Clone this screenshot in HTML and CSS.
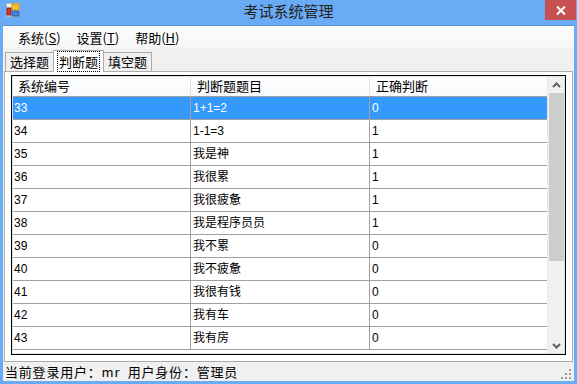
FILE: index.html
```html
<!DOCTYPE html>
<html lang="zh-CN">
<head>
    <meta charset="UTF-8">
    <title>考试系统管理</title>
    <link rel="stylesheet" href="styles.css">
</head>
<body>
    <div class="window">
        <div class="titlebar">
            <svg class="app-icon" width="14" height="14" viewBox="0 0 14 14">
                <rect x="0.5" y="0.5" width="13" height="13" fill="#f4f4f4" stroke="#b9b9b9"/>
                <rect x="6" y="1" width="7" height="6" fill="#f2c230" stroke="#c8961a"/>
                <rect x="1" y="5" width="4" height="7" fill="#d2322d" stroke="#8c1d1a"/>
                <rect x="6" y="8" width="7" height="5" fill="#3d86d8" stroke="#2a5ea0"/>
            </svg>
            <span class="title">考试系统管理</span>
            <button class="close-btn">
                <svg width="10" height="9" viewBox="0 0 10 9">
                    <path d="M1 0.5 L9 8.5 M9 0.5 L1 8.5" stroke="#fff" stroke-width="2"/>
                </svg>
            </button>
        </div>

        <div class="client">
            <div class="menubar">
                <span class="menu-item">系统(<u>S</u>)</span>
                <span class="menu-item">设置(<u>T</u>)</span>
                <span class="menu-item">帮助(<u>H</u>)</span>
            </div>

            <div class="tabs">
                <span class="tab">选择题</span>
                <span class="tab active"><span class="focus">判断题</span></span>
                <span class="tab">填空题</span>
            </div>

            <div class="tabpage">
                <div class="grid">
                    <div class="grid-body">
                        <table class="table">
                            <thead>
                                <tr>
                                    <th>系统编号</th>
                                    <th>判断题题目</th>
                                    <th>正确判断</th>
                                </tr>
                            </thead>
                            <tbody id="rows"></tbody>
                        </table>
                    </div>
                    <div class="scrollbar">
                        <div class="sb-btn">
                            <svg width="9" height="6" viewBox="0 0 9 6"><path d="M1 5 L4.5 1.5 L8 5" fill="none" stroke="#606060" stroke-width="2"/></svg>
                        </div>
                        <div class="sb-track">
                            <div class="sb-thumb"></div>
                        </div>
                        <div class="sb-btn">
                            <svg width="9" height="6" viewBox="0 0 9 6"><path d="M1 1 L4.5 4.5 L8 1" fill="none" stroke="#606060" stroke-width="2"/></svg>
                        </div>
                    </div>
                </div>
            </div>

            <div class="statusbar">
                <span class="status-text">当前登录用户：mr&nbsp;&nbsp;用户身份：管理员</span>
                <svg class="grip" width="11" height="11" viewBox="0 0 11 11" fill="#9a9a9a">
                    <rect x="8" y="0" width="2" height="2"/>
                    <rect x="4" y="4" width="2" height="2"/><rect x="8" y="4" width="2" height="2"/>
                    <rect x="0" y="8" width="2" height="2"/><rect x="4" y="8" width="2" height="2"/><rect x="8" y="8" width="2" height="2"/>
                </svg>
            </div>
        </div>
    </div>

    <script>
        var data = [
            ["33", "1+1=2", "0"],
            ["34", "1-1=3", "1"],
            ["35", "我是神", "1"],
            ["36", "我很累", "1"],
            ["37", "我很疲惫", "1"],
            ["38", "我是程序员员", "1"],
            ["39", "我不累", "0"],
            ["40", "我不疲惫", "0"],
            ["41", "我很有钱", "0"],
            ["42", "我有车", "0"],
            ["43", "我有房", "0"]
        ];
        var tbody = document.getElementById("rows");
        data.forEach(function(row, i) {
            var tr = document.createElement("tr");
            if (i === 0) tr.className = "selected";
            row.forEach(function(cell) {
                var td = document.createElement("td");
                td.textContent = cell;
                tr.appendChild(td);
            });
            tbody.appendChild(tr);
        });
    </script>
</body>
</html>
```

FILE: styles.css
```css
body {
    margin: 0;
    padding: 0;
    background: #6aabf5;
    font-family: "Noto Sans CJK SC", sans-serif;
    overflow: hidden;
}
.window {
    width: 577px;
    height: 384px;
    display: flex;
    flex-direction: column;
    background: #6aabf5;
}
.titlebar {
    height: 25px;
    display: flex;
    align-items: flex-start;
    position: relative;
    flex-shrink: 0;
}
.app-icon {
    margin: 3px 0 0 6px;
}
.title {
    position: absolute;
    left: 0;
    right: 0;
    top: 1px;
    text-align: center;
    font-size: 15px;
    line-height: 20px;
    color: #222;
}
.close-btn {
    position: absolute;
    right: 1px;
    top: 0;
    width: 31px;
    height: 20px;
    border: none;
    padding: 0;
    background: #c75050;
    display: flex;
    justify-content: center;
    align-items: center;
}
.client {
    flex: 1;
    margin: 0 3px 3px 3px;
    border-top: 1px solid #5a95d8;
    background: #f0f0f0;
    display: flex;
    flex-direction: column;
    min-height: 0;
}
.menubar {
    height: 23px;
    background: linear-gradient(to bottom, #fdfdfd, #f5f5f5);
    display: flex;
    align-items: center;
    padding-left: 15px;
    flex-shrink: 0;
}
.menu-item {
    font-size: 13px;
    color: #000;
    margin-right: 16px;
    line-height: 20px;
}
.menu-item u {
    text-decoration: underline;
}
.tabs {
    height: 22px;
    display: flex;
    align-items: flex-end;
    padding-left: 2px;
    flex-shrink: 0;
}
.tab {
    font-size: 13px;
    line-height: 17px;
    height: 18px;
    padding: 0 4px;
    border: 1px solid #acacac;
    border-bottom: none;
    background: #f0f0f0;
    color: #000;
}
.tab + .tab {
    margin-left: -1px;
}
.tab.active {
    height: 21px;
    line-height: 21px;
    background: #fff;
    position: relative;
    z-index: 1;
    margin-bottom: -1px;
    padding: 0 3px;
}
.focus {
    border: 1px dotted #000;
    padding: 0 1px;
    line-height: 16px;
}
.tabpage {
    flex: 1;
    margin: 0 1px;
    border: 1px solid #acacac;
    background: #fff;
    padding: 3px 6px 6px 6px;
    min-height: 0;
    display: flex;
}
.grid {
    flex: 1;
    border: 1px solid #000;
    outline: 1px solid #e0e0e0;
    outline-offset: -2px;
    display: flex;
    overflow: hidden;
    background: #fff;
}
.grid-body {
    flex: 1;
    overflow: hidden;
}
.table {
    border-collapse: collapse;
    width: 538px;
    table-layout: fixed;
}
.table th {
    height: 20px;
    font-weight: normal;
    font-size: 13px;
    text-align: left;
    padding: 0 0 0 6px;
    color: #000;
    background: linear-gradient(to bottom, #ffffff, #f7f8fa);
    border-right: 1px solid #e2e3e5;
    border-bottom: 1px solid #a0a0a0;
    line-height: 18px;
}
.table th:first-child {
    width: 172px;
}
.table th:nth-child(2) {
    width: 172px;
}
.table td {
    height: 22px;
    font-size: 12px;
    padding: 0 0 0 2px;
    border-right: 1px solid #a0a0a0;
    border-bottom: 1px solid #a0a0a0;
    font-family: "Liberation Sans", "Noto Sans CJK SC", sans-serif;
    color: #000;
    line-height: 22px;
}
.table tr.selected td {
    background: #3399ff;
    color: #fff;
}
.scrollbar {
    width: 17px;
    flex-shrink: 0;
    display: flex;
    flex-direction: column;
    background: #f0f0f0;
    border-left: 1px solid #e8e8e8;
}
.sb-btn {
    height: 17px;
    display: flex;
    justify-content: center;
    align-items: center;
    flex-shrink: 0;
}
.sb-track {
    flex: 1;
    padding: 0 1px;
}
.sb-thumb {
    height: 168px;
    background: #cdcdcd;
}
.statusbar {
    height: 19px;
    display: flex;
    align-items: center;
    justify-content: space-between;
    padding: 0 2px 0 2px;
    font-size: 13px;
    color: #000;
    flex-shrink: 0;
}
.status-text {
    letter-spacing: 0.8px;
}
.grip {
    align-self: flex-end;
    margin-bottom: 1px;
}
```
